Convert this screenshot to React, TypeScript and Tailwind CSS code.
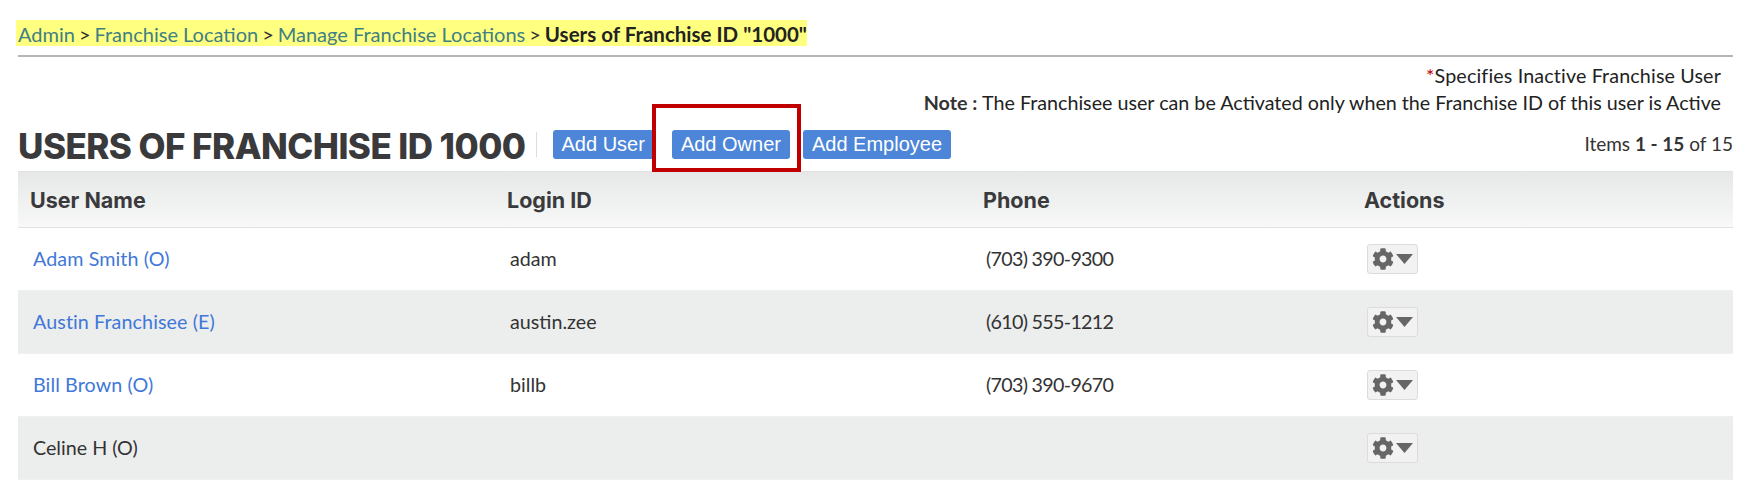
import { FaCog } from "react-icons/fa";

const body = "font-['Lato','Noto_Sans',sans-serif]";
const heavy = "font-['Inter','Liberation_Sans',sans-serif]";

const rows = [
  { name: "Adam Smith (O)", link: true, login: "adam", phone: "(703) 390-9300" },
  { name: "Austin Franchisee (E)", link: true, login: "austin.zee", phone: "(610) 555-1212" },
  { name: "Bill Brown (O)", link: true, login: "billb", phone: "(703) 390-9670" },
  { name: "Celine H (O)", link: false, login: "", phone: "" },
];

function Crumb({ children }: { children: string }) {
  return <a className="text-[#3f8083]">{children}</a>;
}

function Btn({ children }: { children: string }) {
  return (
    <button className="h-[29px] rounded-[3px] bg-[#4d85d8] px-[9px] font-['Liberation_Sans',sans-serif] text-[20px] leading-[29px] text-white">
      {children}
    </button>
  );
}

export default function App() {
  return (
    <div className={`${body} h-[481px] w-[1752px] overflow-hidden bg-white pl-[18px] pr-[19px] pt-5 text-[#333]`}>
      <div className="flex h-[26px] items-center">
        <div className="-ml-[2px] flex h-[26px] items-center bg-[#ffff80] pl-[2px] pt-[2px] text-[20px] leading-[26px]">
          <Crumb>Admin</Crumb>
          <span className="mx-[4px]">&gt;</span>
          <Crumb>Franchise Location</Crumb>
          <span className="mx-[4px]">&gt;</span>
          <Crumb>Manage Franchise Locations</Crumb>
          <span className="mx-[4px]">&gt;</span>
          <b className="text-[20.5px] text-[#222]">Users of Franchise ID "1000"</b>
        </div>
      </div>
      <div className="mt-[9px] h-[2px] bg-[#b5b5b5]" />
      <div className="mt-[5px] pr-[12px] text-right text-[19.7px] leading-[27px] text-[#222]">
        <div className="tracking-[0.15px]"><span className="text-[#c00000]">*</span>Specifies Inactive Franchise User</div>
        <div><b className="text-[#333]">Note : </b>The Franchisee user can be Activated only when the Franchise ID of this user is Active</div>
      </div>
      <div className="mt-[14px] flex h-[29px] items-center">
        <h1 className={`${heavy} mt-[4px] text-[35px] font-extrabold uppercase leading-[29px] tracking-[-0.55px] text-[#3a3a3c]`}>Users of Franchise ID 1000</h1>
        <div className="ml-[10px] h-[25px] w-px bg-[#ddd]" />
        <div className="ml-[16px] flex items-center gap-[18px]">
          <Btn>Add User</Btn>
          <div className="relative flex">
            <Btn>Add Owner</Btn>
            <div className="absolute -left-[20px] -top-[26px] h-[68px] w-[149px] border-4 border-[#c00000]" />
          </div>
        </div>
        <div className="ml-[13px]"><Btn>Add Employee</Btn></div>
        <div className="ml-auto text-[19px] text-[#333]">Items <b>1 - 15</b> of 15</div>
      </div>
      <div className="mt-3 border-y border-[#e2e2e2] bg-gradient-to-b from-[#e6e8e8] to-[#f8f8f8]">
        <div className={`${heavy} grid h-[55px] grid-cols-[477px_476px_381px_1fr] items-center pl-3 pt-[2px] text-[21.5px] font-bold text-[#3a3a3c]`}>
          <div>User Name</div>
          <div>Login ID</div>
          <div>Phone</div>
          <div>Actions</div>
        </div>
      </div>
      {rows.map((r, i) => (
        <div
          key={r.name}
          className={`grid h-[63px] grid-cols-[477px_476px_381px_1fr] items-center border-b border-[#f0f0f0] pl-[15px] text-[19.7px] ${i % 2 ? "bg-[#eceded]" : "bg-white"}`}
        >
          <div className={r.link ? "tracking-[0.1px] text-[#3f78d8]" : "text-[#333]"}>{r.name}</div>
          <div>{r.login}</div>
          <div className="tracking-[-0.7px]">{r.phone}</div>
          <div>
            <button className="flex h-[30px] w-[51px] items-center justify-center gap-[2px] rounded-[3px] border border-[#dcdcdc] bg-[#f2f2f2] text-[#666]">
              <FaCog className="text-[22px]" />
              <svg width="17" height="10" viewBox="0 0 17 10" className="fill-[#666]">
                <polygon points="0,0 17,0 8.5,10" />
              </svg>
            </button>
          </div>
        </div>
      ))}
    </div>
  );
}
